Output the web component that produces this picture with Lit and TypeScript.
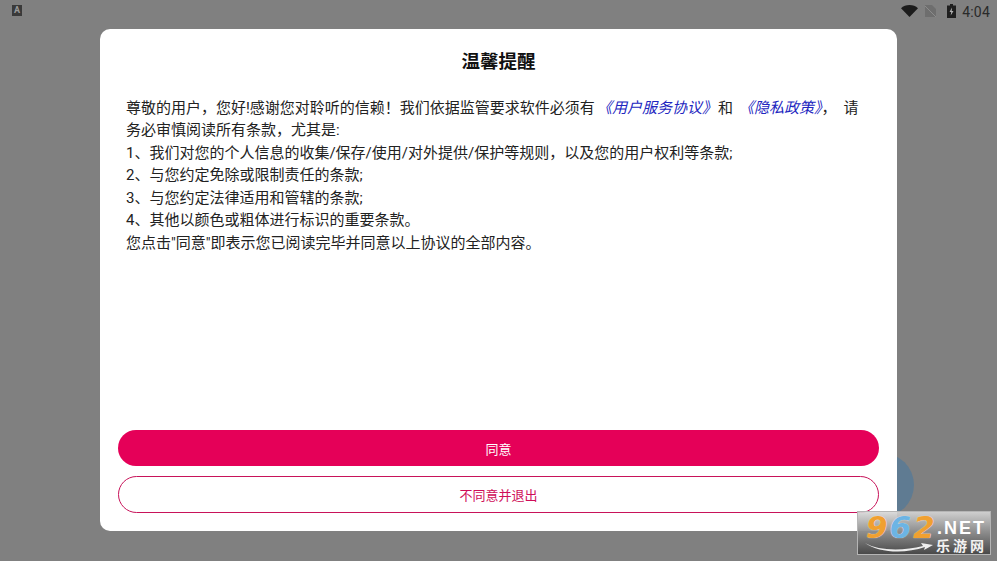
import { LitElement, html, css } from "lit";
import { customElement } from "lit/decorators.js";

@customElement("app-root")
export class AppRoot extends LitElement {
  static styles = css`
    :host { display: block; width: 997px; height: 561px; position: relative; overflow: hidden; background: #808080;
      font-family: "Roboto", "Noto Sans CJK SC", sans-serif; }
    .status { height: 29px; display: flex; align-items: flex-start; padding: 0 7px 0 12px; box-sizing: border-box; }
    .notif { width: 10px; height: 11px; margin-top: 5px; background: #3a3a3a; color: #9a9a9a; font: bold 9px/11px Roboto, sans-serif; text-align: center; }
    .spacer { flex: 1; }
    .wifi { margin: 5px 7px 0 0; }
    .sim { margin: 5px 11px 0 0; }
    .batt { margin: 4px 6px 0 0; }
    .time { font: 400 14px/14px Roboto, sans-serif; color: #2a2a2a; margin-top: 5px; letter-spacing: 0.2px; }
    .dialog { position: relative; z-index: 1; margin: 0 100px; width: 797px; height: 502px; background: #fff; border-radius: 10px; box-sizing: border-box;
      display: flex; flex-direction: column; padding: 22px 18px 18px; }
    h1 { margin: 0; font-size: 18.5px; line-height: 22px; font-weight: 700; text-align: center; color: #111; }
    .body { flex: 1; margin: 23.5px 8px 0; font-size: 15px; line-height: 22.6px; color: #222; }
    .body p { margin: 0; }
    .link { font-style: italic; color: #2226c0; }
    .first { margin-left: 2px; }
    .mid { margin: 0 6px 0 1px; }
    .end { margin-right: 7px; }
    .btn { height: 37px; border-radius: 19px; box-sizing: border-box; font-size: 13px; display: flex; align-items: center; justify-content: center; }
    .primary { background: #e50058; color: #fff; height: 36px; margin-bottom: 10px; }
    .outline { background: #fff; color: #cf0d58; border: 1px solid #c8135a; }
    .bubble { position: absolute; left: 850px; top: 453px; width: 64px; height: 64px; border-radius: 50%; background: #5f7b92; }
    .wm { position: absolute; z-index: 2; left: 857px; top: 511px; width: 134px; height: 44px; box-sizing: border-box; border: 1px solid #b5b5b5;
      background: linear-gradient(180deg, rgba(215,215,215,.9) 0%, rgba(145,145,145,.95) 45%, rgba(70,70,70,.95) 100%); }
    .n962 { position: absolute; left: 8px; top: 1px; font: italic 700 31px/28px "DejaVu Sans", sans-serif; letter-spacing: 2px; color: #f0a030; text-shadow: 0 0 1px #fff; }
    .n962 b { color: #6cb4e4; font-weight: 700; }
    .net { position: absolute; left: 79px; top: 6px; font: 700 18px/20px "Liberation Sans", sans-serif; letter-spacing: 2px; color: #fff; }
    .cn { position: absolute; left: 78px; top: 25px; font: 700 14px/16px "Noto Sans CJK SC", sans-serif; letter-spacing: 3px; color: #f2f2f2; }
    .swoosh { position: absolute; left: 7px; top: 29px; }
  `;

  render() {
    return html`
      <div class="bubble"></div>
      <div class="status">
        <div class="notif">A</div>
        <div class="spacer"></div>
        <svg class="wifi" width="17" height="12" viewBox="0 0 17 12"><path d="M0 3.200C2.200 1.200 5.200 0 8.500 0s6.300 1.200 8.500 3.200L8.500 12z" fill="#1c1c1c"/></svg>
        <svg class="sim" width="11" height="12" viewBox="0 0 11 12"><path d="M0 0h7l4 4v8H0z" fill="#6e6e6e"/><path d="M0 1l11 11" stroke="#8c8c8c" stroke-width="1"/></svg>
        <svg class="batt" width="9" height="14" viewBox="0 0 9 14"><path d="M3 0h3v1.500h3V14H0V1.500h3z" fill="#1f1f1f"/><path d="M5 3.500L2.500 8h1.700l-.5 3.500L6.500 7H4.700z" fill="#b0b0b0"/></svg>
        <div class="time">4:04</div>
      </div>
      <div class="dialog">
        <h1>温馨提醒</h1>
        <div class="body">
          <p>尊敬的用户，您好!感谢您对聆听的信赖！我们依据监管要求软件必须有<span class="link first">《用户服务协议》</span><span class="mid">和</span><span class="link">《隐私政策》</span><span class="end">，</span>请务必审慎阅读所有条款，尤其是:</p>
          <p>1、我们对您的个人信息的收集/保存/使用/对外提供/保护等规则，以及您的用户权利等条款;</p>
          <p>2、与您约定免除或限制责任的条款;</p>
          <p>3、与您约定法律适用和管辖的条款;</p>
          <p>4、其他以颜色或粗体进行标识的重要条款。</p>
          <p>您点击"同意"即表示您已阅读完毕并同意以上协议的全部内容。</p>
        </div>
        <div class="btn primary">同意</div>
        <div class="btn outline">不同意并退出</div>
      </div>
      <div class="wm">
        <div class="n962">9<b>6</b>2</div>
        <div class="net">.NET</div>
        <div class="cn">乐游网</div>
        <svg class="swoosh" width="68" height="12" viewBox="0 0 68 12"><path d="M0 2C14 10 38 10 58 5L56 2l12 2-9 5 1-3C40 13 14 12 0 2z" fill="#eee"/></svg>
      </div>
    `;
  }
}
